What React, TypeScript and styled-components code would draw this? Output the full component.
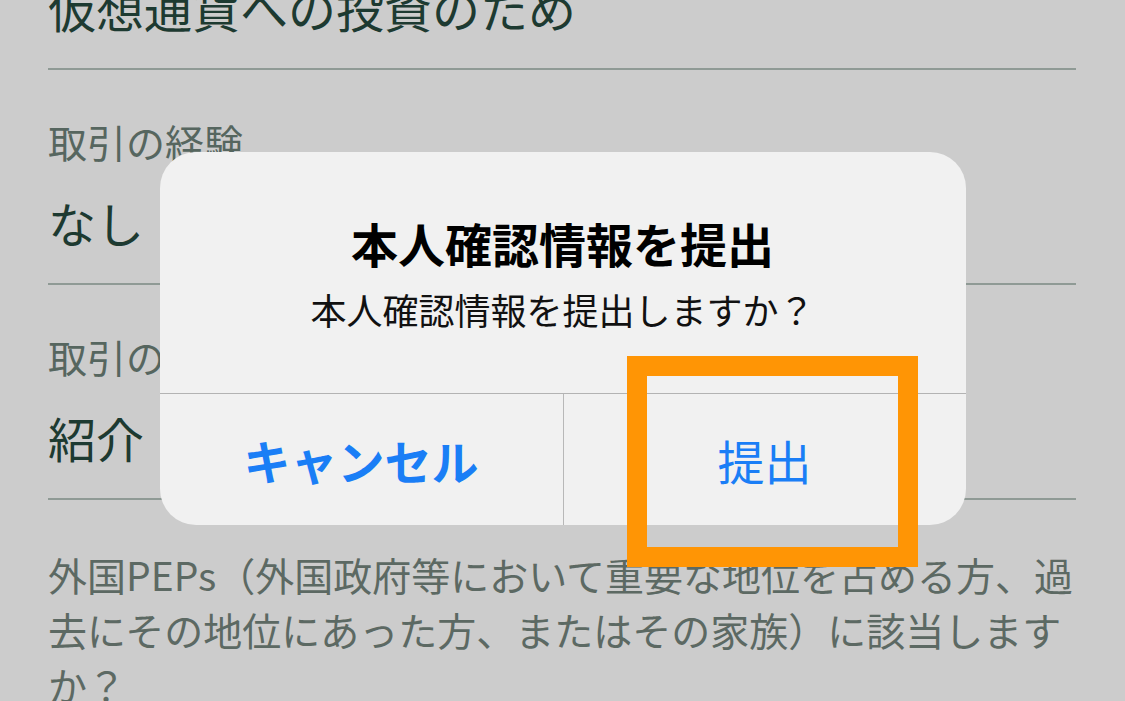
import styled, { createGlobalStyle } from "styled-components";

const GlobalStyle = createGlobalStyle`
  html, body {
    margin: 0;
    padding: 0;
    background: #cccccc;
    overflow: hidden;
  }
  body {
    font-family: "Noto Sans CJK JP", "Noto Sans", sans-serif;
  }
`;

const Page = styled.div`
  margin-top: -145px;
  padding: 0 49px 0 48px;
`;

const Field = styled.div`
  padding: 47px 0 31px;
  border-bottom: 2px solid #8f9a95;
`;

const Label = styled.div`
  font-size: 39px;
  line-height: 48px;
  color: #56665f;
`;

const Value = styled.div`
  margin-top: 27px;
  font-size: 48px;
  line-height: 60px;
  color: #1d3a31;
`;

const Note = styled.p`
  margin: 0;
  padding-top: 47px;
  font-size: 39px;
  line-height: 55px;
  color: #5c6963;
`;

const Overlay = styled.div`
  position: fixed;
  inset: 0;
  display: flex;
  align-items: center;
  justify-content: center;
  padding-bottom: 24px;
`;

const Alert = styled.div`
  width: 806px;
  background: #f1f1f1;
  border-radius: 36px;
  text-align: center;
`;

const AlertBody = styled.div`
  padding: 63px 40px 62px;
`;

const Title = styled.div`
  font-size: 47px;
  line-height: 56px;
  font-weight: 700;
  color: #000;
`;

const Message = styled.div`
  margin-top: 16px;
  font-size: 36px;
  line-height: 44px;
  color: #111;
`;

const Actions = styled.div`
  display: grid;
  grid-template-columns: 1fr 1fr;
  border-top: 1px solid #b3b3b3;
`;

const Action = styled.div<{ $primary?: boolean; $divider?: boolean }>`
  position: relative;
  height: 131px;
  display: flex;
  align-items: center;
  justify-content: center;
  font-size: 47px;
  font-weight: ${(p) => (p.$primary ? 700 : 400)};
  color: #1a7ef6;
  border-left: ${(p) => (p.$divider ? "1px solid #b8b8b8" : "none")};
`;

const Highlight = styled.div`
  position: absolute;
  left: 63px;
  top: -38px;
  width: 291px;
  height: 211px;
  box-sizing: border-box;
  border: 20px solid #ff9505;
  pointer-events: none;
`;

export default function App() {
  return (
    <>
      <GlobalStyle />
      <Page>
        <Field>
          <Label>取引の目的</Label>
          <Value>仮想通貨への投資のため</Value>
        </Field>
        <Field>
          <Label>取引の経験</Label>
          <Value>なし</Value>
        </Field>
        <Field>
          <Label>取引のきっかけ</Label>
          <Value>紹介</Value>
        </Field>
        <Note>
          外国PEPs（外国政府等において重要な地位を占める方、過去にその地位にあった方、またはその家族）に該当しますか？
        </Note>
      </Page>
      <Overlay>
        <Alert>
          <AlertBody>
            <Title>本人確認情報を提出</Title>
            <Message>本人確認情報を提出しますか？</Message>
          </AlertBody>
          <Actions>
            <Action $primary>キャンセル</Action>
            <Action $divider>
              提出
              <Highlight />
            </Action>
          </Actions>
        </Alert>
      </Overlay>
    </>
  );
}
